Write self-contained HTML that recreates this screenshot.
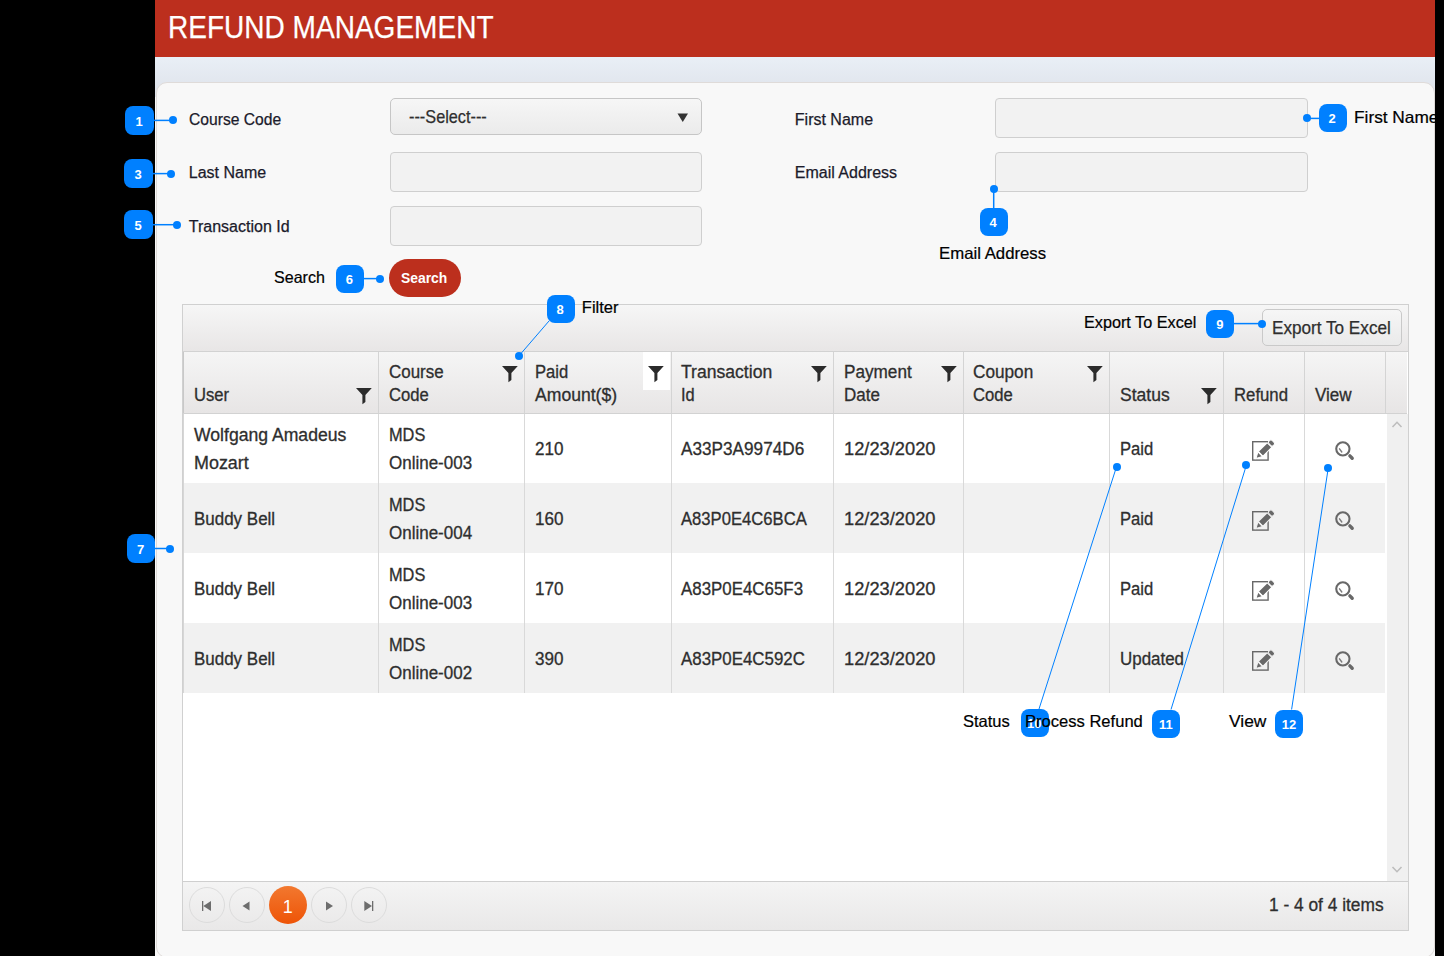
<!DOCTYPE html>
<html><head><meta charset="utf-8"><title>Refund Management</title>
<style>
html,body{margin:0;padding:0;}
body{width:1444px;height:956px;background:#000;position:relative;overflow:hidden;font-family:"Liberation Sans",sans-serif;}
.a{position:absolute;box-sizing:border-box;}
.t{position:absolute;white-space:nowrap;line-height:1;transform-origin:0 0;}
svg{position:absolute;overflow:visible;}
</style></head><body>

<div class="a" style="left:155px;top:0px;width:1280px;height:956px;background:#F8F8F8;"></div>
<div class="a" style="left:155px;top:0px;width:1280px;height:57px;background:#BC2F1E;"></div>
<div class="a" style="left:155px;top:57px;width:1280px;height:40px;background:linear-gradient(#E9EFF6,#DEE2EA);"></div>
<div class="a" style="left:156px;top:82px;width:1279px;height:876px;background:#F8F8F8;border-radius:11px;border:1px solid #DFDBD9;"></div>
<div class="t" style="left:167.90px;top:11.20px;font-size:32px;color:#FFFFFF;transform:scaleX(0.8761);-webkit-text-stroke:0.25px #FFFFFF;">REFUND MANAGEMENT</div>
<div class="t" style="left:188.80px;top:111.50px;font-size:16px;color:#1B1B2B;transform:scaleX(0.9772);-webkit-text-stroke:0.25px #1B1B2B;">Course Code</div>
<div class="t" style="left:188.80px;top:164.50px;font-size:16px;color:#1B1B2B;-webkit-text-stroke:0.25px #1B1B2B;">Last Name</div>
<div class="t" style="left:188.80px;top:218.50px;font-size:16px;color:#1B1B2B;-webkit-text-stroke:0.25px #1B1B2B;">Transaction Id</div>
<div class="t" style="left:794.80px;top:111.50px;font-size:16px;color:#1B1B2B;-webkit-text-stroke:0.25px #1B1B2B;">First Name</div>
<div class="t" style="left:794.80px;top:164.50px;font-size:16px;color:#1B1B2B;-webkit-text-stroke:0.25px #1B1B2B;">Email Address</div>
<div class="a" style="left:390px;top:98px;width:312px;height:37px;background:linear-gradient(#F6F6F6,#EBEBEB);border:1px solid #C6C6C6;border-radius:5px;"></div>
<div class="t" style="left:409.10px;top:107.58px;font-size:18.5px;color:#2E2E2E;transform:scaleX(0.8801);-webkit-text-stroke:0.25px #2E2E2E;">---Select---</div>
<svg style="left:677px;top:113px" width="12" height="10"><path d="M0.5,0.5 H11 L5.75,9 Z" fill="#333"/></svg>
<div class="a" style="left:390px;top:152px;width:312px;height:40px;background:#F2F2F2;border:1px solid #CFCFCF;border-radius:4px;"></div>
<div class="a" style="left:390px;top:206px;width:312px;height:40px;background:#F2F2F2;border:1px solid #CFCFCF;border-radius:4px;"></div>
<div class="a" style="left:995px;top:98px;width:313px;height:40px;background:#F2F2F2;border:1px solid #CFCFCF;border-radius:4px;"></div>
<div class="a" style="left:995px;top:152px;width:313px;height:40px;background:#F2F2F2;border:1px solid #CFCFCF;border-radius:4px;"></div>
<div class="a" style="left:389px;top:259px;width:72px;height:38px;background:#BC2F1D;border-radius:19px;"></div>
<div class="t" style="left:401.00px;top:270.68px;font-size:14.5px;color:#FFFFFF;font-weight:bold;transform:scaleX(0.9576);">Search</div>
<div class="a" style="left:182px;top:304px;width:1227px;height:627px;background:#FFFFFF;border:1px solid #D0D0D0;"></div>
<div class="a" style="left:183px;top:305px;width:1225px;height:46px;background:linear-gradient(#F6F6F6,#E8E6E6);"></div>
<div class="a" style="left:183px;top:351px;width:1225px;height:1px;background:#D2D2D2;"></div>
<div class="a" style="left:1262px;top:309px;width:140px;height:37px;background:linear-gradient(#F6F6F6,#EAEAEA);border:1px solid #C9C9C9;border-radius:5px;"></div>
<div class="t" style="left:1271.70px;top:319.38px;font-size:18.5px;color:#2E2E2E;transform:scaleX(0.9267);-webkit-text-stroke:0.25px #2E2E2E;">Export To Excel</div>
<div class="a" style="left:183px;top:352px;width:1224px;height:61px;background:linear-gradient(#F5F5F5,#E7E5E5);"></div>
<div class="a" style="left:183px;top:413px;width:1224px;height:1px;background:#D2D2D2;"></div>
<div class="a" style="left:183px;top:352px;width:1px;height:61px;background:#C8C8C8;"></div>
<div class="a" style="left:378px;top:352px;width:1px;height:61px;background:#D4D4D4;"></div>
<div class="a" style="left:524px;top:352px;width:1px;height:61px;background:#D4D4D4;"></div>
<div class="a" style="left:671px;top:352px;width:1px;height:61px;background:#D4D4D4;"></div>
<div class="a" style="left:833px;top:352px;width:1px;height:61px;background:#D4D4D4;"></div>
<div class="a" style="left:963px;top:352px;width:1px;height:61px;background:#D4D4D4;"></div>
<div class="a" style="left:1109px;top:352px;width:1px;height:61px;background:#D4D4D4;"></div>
<div class="a" style="left:1223px;top:352px;width:1px;height:61px;background:#D4D4D4;"></div>
<div class="a" style="left:1304px;top:352px;width:1px;height:61px;background:#D4D4D4;"></div>
<div class="a" style="left:1385px;top:352px;width:1px;height:61px;background:#D4D4D4;"></div>
<div class="t" style="left:193.80px;top:386.83px;font-size:17.5px;color:#2E2E2E;transform:scaleX(0.9499);-webkit-text-stroke:0.3px #2E2E2E;">User</div>
<div class="t" style="left:388.90px;top:363.93px;font-size:17.5px;color:#2E2E2E;transform:scaleX(0.9681);-webkit-text-stroke:0.3px #2E2E2E;">Course</div>
<div class="t" style="left:388.90px;top:386.83px;font-size:17.5px;color:#2E2E2E;transform:scaleX(0.9510);-webkit-text-stroke:0.3px #2E2E2E;">Code</div>
<div class="t" style="left:534.80px;top:363.93px;font-size:17.5px;color:#2E2E2E;transform:scaleX(0.9501);-webkit-text-stroke:0.3px #2E2E2E;">Paid</div>
<div class="t" style="left:534.80px;top:386.83px;font-size:17.5px;color:#2E2E2E;transform:scaleX(1.0049);-webkit-text-stroke:0.3px #2E2E2E;">Amount($)</div>
<div class="t" style="left:681.40px;top:363.93px;font-size:17.5px;color:#2E2E2E;transform:scaleX(1.0044);-webkit-text-stroke:0.3px #2E2E2E;">Transaction</div>
<div class="t" style="left:681.40px;top:386.83px;font-size:17.5px;color:#2E2E2E;transform:scaleX(0.9384);-webkit-text-stroke:0.3px #2E2E2E;">Id</div>
<div class="t" style="left:843.90px;top:363.93px;font-size:17.5px;color:#2E2E2E;transform:scaleX(0.9804);-webkit-text-stroke:0.3px #2E2E2E;">Payment</div>
<div class="t" style="left:843.90px;top:386.83px;font-size:17.5px;color:#2E2E2E;transform:scaleX(0.9689);-webkit-text-stroke:0.3px #2E2E2E;">Date</div>
<div class="t" style="left:973.40px;top:363.93px;font-size:17.5px;color:#2E2E2E;transform:scaleX(0.9821);-webkit-text-stroke:0.3px #2E2E2E;">Coupon</div>
<div class="t" style="left:973.40px;top:386.83px;font-size:17.5px;color:#2E2E2E;transform:scaleX(0.9510);-webkit-text-stroke:0.3px #2E2E2E;">Code</div>
<div class="t" style="left:1119.80px;top:386.83px;font-size:17.5px;color:#2E2E2E;transform:scaleX(1.0020);-webkit-text-stroke:0.3px #2E2E2E;">Status</div>
<div class="t" style="left:1234.00px;top:386.83px;font-size:17.5px;color:#2E2E2E;transform:scaleX(0.9566);-webkit-text-stroke:0.3px #2E2E2E;">Refund</div>
<div class="t" style="left:1315.40px;top:386.83px;font-size:17.5px;color:#2E2E2E;transform:scaleX(0.9735);-webkit-text-stroke:0.3px #2E2E2E;">View</div>
<div class="a" style="left:643px;top:352px;width:27px;height:38px;background:#FFFFFF;"></div>
<svg style="left:356px;top:387.8px" width="16" height="16"><path d="M0,0 H15.8 L9.4,7 V14 L6.4,16.2 V7 Z" fill="#2B2B2B"/></svg>
<svg style="left:502.3px;top:366px" width="16" height="16"><path d="M0,0 H15.8 L9.4,7 V14 L6.4,16.2 V7 Z" fill="#2B2B2B"/></svg>
<svg style="left:648.3px;top:365.6px" width="16" height="16"><path d="M0,0 H15.8 L9.4,7 V14 L6.4,16.2 V7 Z" fill="#2B2B2B"/></svg>
<svg style="left:811px;top:365.6px" width="16" height="16"><path d="M0,0 H15.8 L9.4,7 V14 L6.4,16.2 V7 Z" fill="#2B2B2B"/></svg>
<svg style="left:940.6px;top:365.6px" width="16" height="16"><path d="M0,0 H15.8 L9.4,7 V14 L6.4,16.2 V7 Z" fill="#2B2B2B"/></svg>
<svg style="left:1087.2px;top:365.6px" width="16" height="16"><path d="M0,0 H15.8 L9.4,7 V14 L6.4,16.2 V7 Z" fill="#2B2B2B"/></svg>
<svg style="left:1201px;top:387.8px" width="16" height="16"><path d="M0,0 H15.8 L9.4,7 V14 L6.4,16.2 V7 Z" fill="#2B2B2B"/></svg>
<div class="t" style="left:193.80px;top:426.83px;font-size:17.5px;color:#2E2E2E;transform:scaleX(1.0056);-webkit-text-stroke:0.3px #2E2E2E;">Wolfgang Amadeus</div>
<div class="t" style="left:193.80px;top:455.23px;font-size:17.5px;color:#2E2E2E;transform:scaleX(1.0243);-webkit-text-stroke:0.3px #2E2E2E;">Mozart</div>
<div class="t" style="left:388.90px;top:426.83px;font-size:17.5px;color:#2E2E2E;transform:scaleX(0.9332);-webkit-text-stroke:0.3px #2E2E2E;">MDS</div>
<div class="t" style="left:388.90px;top:455.23px;font-size:17.5px;color:#2E2E2E;transform:scaleX(0.9708);-webkit-text-stroke:0.3px #2E2E2E;">Online-003</div>
<div class="t" style="left:534.80px;top:441.23px;font-size:17.5px;color:#2E2E2E;transform:scaleX(0.9760);-webkit-text-stroke:0.3px #2E2E2E;">210</div>
<div class="t" style="left:681.40px;top:441.23px;font-size:17.5px;color:#2E2E2E;transform:scaleX(0.9817);-webkit-text-stroke:0.3px #2E2E2E;">A33P3A9974D6</div>
<div class="t" style="left:844.30px;top:441.23px;font-size:17.5px;color:#2E2E2E;transform:scaleX(1.0445);-webkit-text-stroke:0.3px #2E2E2E;">12/23/2020</div>
<div class="t" style="left:1119.80px;top:441.23px;font-size:17.5px;color:#2E2E2E;transform:scaleX(0.9501);-webkit-text-stroke:0.3px #2E2E2E;">Paid</div>
<svg style="left:1250px;top:438px" width="28" height="26" viewBox="0 0 28 26">
<rect x="2.7" y="3.7" width="15.4" height="18.4" stroke="#686868" stroke-width="1.4" fill="none"/>
<g transform="translate(10.65,15.85) rotate(-45)" fill="#686868" stroke="#FFFFFF" stroke-width="1">
<rect x="0" y="-3.25" width="12.5" height="6.5" rx="0.8"/>
<rect x="13.1" y="-3.1" width="4.5" height="6.2" rx="1.8"/>
<path d="M-0.6,-3.25 L-0.6,3.25 L-6.6,0 Z"/>
</g>
</svg>
<svg style="left:1333px;top:439px" width="24" height="24" viewBox="0 0 24 24">
<circle cx="9.87" cy="9.87" r="6.65" stroke="#686868" stroke-width="2.1" fill="none"/>
<path d="M16.9,16.9 L19.2,19.2" stroke="#686868" stroke-width="3.4" stroke-linecap="round"/>
<path d="M6.5,9.8 L8.8,13" stroke="#7A7A7A" stroke-width="1.4" stroke-linecap="round"/>
</svg>
<div class="a" style="left:183px;top:483px;width:1202px;height:70px;background:#F1F1F1;"></div>
<div class="t" style="left:193.80px;top:511.23px;font-size:17.5px;color:#2E2E2E;transform:scaleX(0.9695);-webkit-text-stroke:0.3px #2E2E2E;">Buddy Bell</div>
<div class="t" style="left:388.90px;top:496.83px;font-size:17.5px;color:#2E2E2E;transform:scaleX(0.9332);-webkit-text-stroke:0.3px #2E2E2E;">MDS</div>
<div class="t" style="left:388.90px;top:525.22px;font-size:17.5px;color:#2E2E2E;transform:scaleX(0.9708);-webkit-text-stroke:0.3px #2E2E2E;">Online-004</div>
<div class="t" style="left:534.80px;top:511.23px;font-size:17.5px;color:#2E2E2E;transform:scaleX(0.9760);-webkit-text-stroke:0.3px #2E2E2E;">160</div>
<div class="t" style="left:681.40px;top:511.23px;font-size:17.5px;color:#2E2E2E;transform:scaleX(0.9509);-webkit-text-stroke:0.3px #2E2E2E;">A83P0E4C6BCA</div>
<div class="t" style="left:844.30px;top:511.23px;font-size:17.5px;color:#2E2E2E;transform:scaleX(1.0445);-webkit-text-stroke:0.3px #2E2E2E;">12/23/2020</div>
<div class="t" style="left:1119.80px;top:511.23px;font-size:17.5px;color:#2E2E2E;transform:scaleX(0.9501);-webkit-text-stroke:0.3px #2E2E2E;">Paid</div>
<svg style="left:1250px;top:508px" width="28" height="26" viewBox="0 0 28 26">
<rect x="2.7" y="3.7" width="15.4" height="18.4" stroke="#686868" stroke-width="1.4" fill="none"/>
<g transform="translate(10.65,15.85) rotate(-45)" fill="#686868" stroke="#F1F1F1" stroke-width="1">
<rect x="0" y="-3.25" width="12.5" height="6.5" rx="0.8"/>
<rect x="13.1" y="-3.1" width="4.5" height="6.2" rx="1.8"/>
<path d="M-0.6,-3.25 L-0.6,3.25 L-6.6,0 Z"/>
</g>
</svg>
<svg style="left:1333px;top:509px" width="24" height="24" viewBox="0 0 24 24">
<circle cx="9.87" cy="9.87" r="6.65" stroke="#686868" stroke-width="2.1" fill="none"/>
<path d="M16.9,16.9 L19.2,19.2" stroke="#686868" stroke-width="3.4" stroke-linecap="round"/>
<path d="M6.5,9.8 L8.8,13" stroke="#7A7A7A" stroke-width="1.4" stroke-linecap="round"/>
</svg>
<div class="t" style="left:193.80px;top:581.22px;font-size:17.5px;color:#2E2E2E;transform:scaleX(0.9695);-webkit-text-stroke:0.3px #2E2E2E;">Buddy Bell</div>
<div class="t" style="left:388.90px;top:566.82px;font-size:17.5px;color:#2E2E2E;transform:scaleX(0.9332);-webkit-text-stroke:0.3px #2E2E2E;">MDS</div>
<div class="t" style="left:388.90px;top:595.22px;font-size:17.5px;color:#2E2E2E;transform:scaleX(0.9708);-webkit-text-stroke:0.3px #2E2E2E;">Online-003</div>
<div class="t" style="left:534.80px;top:581.22px;font-size:17.5px;color:#2E2E2E;transform:scaleX(0.9760);-webkit-text-stroke:0.3px #2E2E2E;">170</div>
<div class="t" style="left:681.40px;top:581.22px;font-size:17.5px;color:#2E2E2E;transform:scaleX(0.9650);-webkit-text-stroke:0.3px #2E2E2E;">A83P0E4C65F3</div>
<div class="t" style="left:844.30px;top:581.22px;font-size:17.5px;color:#2E2E2E;transform:scaleX(1.0445);-webkit-text-stroke:0.3px #2E2E2E;">12/23/2020</div>
<div class="t" style="left:1119.80px;top:581.22px;font-size:17.5px;color:#2E2E2E;transform:scaleX(0.9501);-webkit-text-stroke:0.3px #2E2E2E;">Paid</div>
<svg style="left:1250px;top:578px" width="28" height="26" viewBox="0 0 28 26">
<rect x="2.7" y="3.7" width="15.4" height="18.4" stroke="#686868" stroke-width="1.4" fill="none"/>
<g transform="translate(10.65,15.85) rotate(-45)" fill="#686868" stroke="#FFFFFF" stroke-width="1">
<rect x="0" y="-3.25" width="12.5" height="6.5" rx="0.8"/>
<rect x="13.1" y="-3.1" width="4.5" height="6.2" rx="1.8"/>
<path d="M-0.6,-3.25 L-0.6,3.25 L-6.6,0 Z"/>
</g>
</svg>
<svg style="left:1333px;top:579px" width="24" height="24" viewBox="0 0 24 24">
<circle cx="9.87" cy="9.87" r="6.65" stroke="#686868" stroke-width="2.1" fill="none"/>
<path d="M16.9,16.9 L19.2,19.2" stroke="#686868" stroke-width="3.4" stroke-linecap="round"/>
<path d="M6.5,9.8 L8.8,13" stroke="#7A7A7A" stroke-width="1.4" stroke-linecap="round"/>
</svg>
<div class="a" style="left:183px;top:623px;width:1202px;height:70px;background:#F1F1F1;"></div>
<div class="t" style="left:193.80px;top:651.22px;font-size:17.5px;color:#2E2E2E;transform:scaleX(0.9695);-webkit-text-stroke:0.3px #2E2E2E;">Buddy Bell</div>
<div class="t" style="left:388.90px;top:636.82px;font-size:17.5px;color:#2E2E2E;transform:scaleX(0.9332);-webkit-text-stroke:0.3px #2E2E2E;">MDS</div>
<div class="t" style="left:388.90px;top:665.22px;font-size:17.5px;color:#2E2E2E;transform:scaleX(0.9708);-webkit-text-stroke:0.3px #2E2E2E;">Online-002</div>
<div class="t" style="left:534.80px;top:651.22px;font-size:17.5px;color:#2E2E2E;transform:scaleX(0.9760);-webkit-text-stroke:0.3px #2E2E2E;">390</div>
<div class="t" style="left:681.40px;top:651.22px;font-size:17.5px;color:#2E2E2E;transform:scaleX(0.9650);-webkit-text-stroke:0.3px #2E2E2E;">A83P0E4C592C</div>
<div class="t" style="left:844.30px;top:651.22px;font-size:17.5px;color:#2E2E2E;transform:scaleX(1.0445);-webkit-text-stroke:0.3px #2E2E2E;">12/23/2020</div>
<div class="t" style="left:1119.80px;top:651.22px;font-size:17.5px;color:#2E2E2E;transform:scaleX(0.9675);-webkit-text-stroke:0.3px #2E2E2E;">Updated</div>
<svg style="left:1250px;top:648px" width="28" height="26" viewBox="0 0 28 26">
<rect x="2.7" y="3.7" width="15.4" height="18.4" stroke="#686868" stroke-width="1.4" fill="none"/>
<g transform="translate(10.65,15.85) rotate(-45)" fill="#686868" stroke="#F1F1F1" stroke-width="1">
<rect x="0" y="-3.25" width="12.5" height="6.5" rx="0.8"/>
<rect x="13.1" y="-3.1" width="4.5" height="6.2" rx="1.8"/>
<path d="M-0.6,-3.25 L-0.6,3.25 L-6.6,0 Z"/>
</g>
</svg>
<svg style="left:1333px;top:649px" width="24" height="24" viewBox="0 0 24 24">
<circle cx="9.87" cy="9.87" r="6.65" stroke="#686868" stroke-width="2.1" fill="none"/>
<path d="M16.9,16.9 L19.2,19.2" stroke="#686868" stroke-width="3.4" stroke-linecap="round"/>
<path d="M6.5,9.8 L8.8,13" stroke="#7A7A7A" stroke-width="1.4" stroke-linecap="round"/>
</svg>
<div class="a" style="left:183px;top:414px;width:1px;height:279px;background:#D6D6D6;"></div>
<div class="a" style="left:378px;top:414px;width:1px;height:279px;background:#D9D9D9;"></div>
<div class="a" style="left:524px;top:414px;width:1px;height:279px;background:#D9D9D9;"></div>
<div class="a" style="left:671px;top:414px;width:1px;height:279px;background:#D9D9D9;"></div>
<div class="a" style="left:833px;top:414px;width:1px;height:279px;background:#D9D9D9;"></div>
<div class="a" style="left:963px;top:414px;width:1px;height:279px;background:#D9D9D9;"></div>
<div class="a" style="left:1109px;top:414px;width:1px;height:279px;background:#D9D9D9;"></div>
<div class="a" style="left:1223px;top:414px;width:1px;height:279px;background:#D9D9D9;"></div>
<div class="a" style="left:1304px;top:414px;width:1px;height:279px;background:#D9D9D9;"></div>
<div class="a" style="left:1387px;top:414px;width:21px;height:467px;background:#F0F0F0;"></div>
<svg style="left:1391px;top:419px" width="12" height="10"><path d="M1.5,8 L6,3.3 L10.5,8" stroke="#BDBDBD" stroke-width="1.6" fill="none"/></svg>
<svg style="left:1391px;top:865px" width="12" height="10"><path d="M1.5,2 L6,6.7 L10.5,2" stroke="#BDBDBD" stroke-width="1.6" fill="none"/></svg>
<div class="a" style="left:183px;top:881px;width:1225px;height:1px;background:#CFCFCF;"></div>
<div class="a" style="left:183px;top:882px;width:1225px;height:48px;background:linear-gradient(#F4F4F4,#E9E8E8);"></div>
<div class="a" style="left:189px;top:887px;width:36px;height:36px;border-radius:50%;border:1px solid #DCDCDC;"></div>
<div class="a" style="left:229px;top:887px;width:36px;height:36px;border-radius:50%;border:1px solid #DCDCDC;"></div>
<div class="a" style="left:311px;top:887px;width:36px;height:36px;border-radius:50%;border:1px solid #DCDCDC;"></div>
<div class="a" style="left:351px;top:887px;width:36px;height:36px;border-radius:50%;border:1px solid #DCDCDC;"></div>
<div class="a" style="left:269px;top:886px;width:38px;height:38px;border-radius:50%;background:linear-gradient(#F2782F,#EE5407);"></div>
<div class="t" style="left:282.80px;top:898.00px;font-size:18px;color:#FFFFFF;">1</div>
<svg style="left:201px;top:900px" width="12" height="12"><rect x="1" y="1" width="1.3" height="10" fill="#6D6D6D"/><path d="M2.3,6 L10,1 V11 Z" fill="#6D6D6D"/></svg>
<svg style="left:241px;top:900px" width="12" height="12"><path d="M1.5,6 L8.5,1.5 V10.5 Z" fill="#6D6D6D"/></svg>
<svg style="left:323.5px;top:900px" width="12" height="12"><path d="M9,6 L2,1.5 V10.5 Z" fill="#6D6D6D"/></svg>
<svg style="left:362.5px;top:900px" width="12" height="12"><rect x="9" y="1" width="1.3" height="10" fill="#6D6D6D"/><path d="M9,6 L1.3,1 V11 Z" fill="#6D6D6D"/></svg>
<div class="t" style="left:1269.10px;top:896.82px;font-size:17.5px;color:#2E2E2E;transform:scaleX(0.9901);-webkit-text-stroke:0.3px #2E2E2E;">1 - 4 of 4 items</div>
<svg style="left:0;top:0" width="1444" height="956"><line x1="154" y1="120.4" x2="173.3" y2="120.4" stroke="#0080FF" stroke-width="1.5"/></svg>
<div class="a" style="left:125px;top:106px;width:29px;height:29px;background:#0080FF;border-radius:8px;"></div>
<div class="t" style="left:135.38px;top:114.65px;font-size:13px;color:#FFFFFF;font-weight:bold;-webkit-text-stroke:0.01px #fff;">1</div>
<div class="a" style="left:169.3px;top:116.4px;width:8px;height:8px;background:#0080FF;border-radius:50%;"></div>
<svg style="left:0;top:0" width="1444" height="956"><line x1="153" y1="173.6" x2="170.6" y2="173.6" stroke="#0080FF" stroke-width="1.5"/></svg>
<div class="a" style="left:124px;top:159px;width:29px;height:29px;background:#0080FF;border-radius:8px;"></div>
<div class="t" style="left:134.38px;top:167.65px;font-size:13px;color:#FFFFFF;font-weight:bold;-webkit-text-stroke:0.01px #fff;">3</div>
<div class="a" style="left:166.6px;top:169.6px;width:8px;height:8px;background:#0080FF;border-radius:50%;"></div>
<svg style="left:0;top:0" width="1444" height="956"><line x1="153" y1="224.7" x2="177.4" y2="224.7" stroke="#0080FF" stroke-width="1.5"/></svg>
<div class="a" style="left:124px;top:210px;width:29px;height:29px;background:#0080FF;border-radius:8px;"></div>
<div class="t" style="left:134.38px;top:218.65px;font-size:13px;color:#FFFFFF;font-weight:bold;-webkit-text-stroke:0.01px #fff;">5</div>
<div class="a" style="left:173.4px;top:220.7px;width:8px;height:8px;background:#0080FF;border-radius:50%;"></div>
<svg style="left:0;top:0" width="1444" height="956"><line x1="155" y1="548.5" x2="169.6" y2="548.5" stroke="#0080FF" stroke-width="1.5"/></svg>
<div class="a" style="left:127px;top:534px;width:28px;height:29px;background:#0080FF;border-radius:8px;"></div>
<div class="t" style="left:136.88px;top:542.65px;font-size:13px;color:#FFFFFF;font-weight:bold;-webkit-text-stroke:0.01px #fff;">7</div>
<div class="a" style="left:165.6px;top:544.5px;width:8px;height:8px;background:#0080FF;border-radius:50%;"></div>
<svg style="left:0;top:0" width="1444" height="956"><line x1="1307.3" y1="118.4" x2="1319" y2="118.4" stroke="#0080FF" stroke-width="1.5"/></svg>
<div class="a" style="left:1318.6px;top:104.2px;width:28px;height:28px;background:#0080FF;border-radius:8px;"></div>
<div class="t" style="left:1328.47px;top:112.35px;font-size:13px;color:#FFFFFF;font-weight:bold;-webkit-text-stroke:0.01px #fff;">2</div>
<div class="a" style="left:1303.3px;top:114.4px;width:8px;height:8px;background:#0080FF;border-radius:50%;"></div>
<div class="t" style="left:1353.70px;top:109.27px;font-size:16.5px;color:#000000;transform:scaleX(1.0465);-webkit-text-stroke:0.2px #000;">First Name</div>
<svg style="left:0;top:0" width="1444" height="956"><line x1="993.7" y1="188.5" x2="993.7" y2="209" stroke="#0080FF" stroke-width="1.5"/></svg>
<div class="a" style="left:979.6px;top:208.2px;width:28px;height:28px;background:#0080FF;border-radius:8px;"></div>
<div class="t" style="left:989.48px;top:216.35px;font-size:13px;color:#FFFFFF;font-weight:bold;-webkit-text-stroke:0.01px #fff;">4</div>
<div class="a" style="left:989.7px;top:184.5px;width:8px;height:8px;background:#0080FF;border-radius:50%;"></div>
<div class="t" style="left:938.70px;top:245.17px;font-size:16.5px;color:#000000;transform:scaleX(1.0156);-webkit-text-stroke:0.2px #000;">Email Address</div>
<svg style="left:0;top:0" width="1444" height="956"><line x1="363" y1="278.6" x2="379.6" y2="278.6" stroke="#0080FF" stroke-width="1.5"/></svg>
<div class="a" style="left:335.8px;top:264.5px;width:28px;height:28px;background:#0080FF;border-radius:8px;"></div>
<div class="t" style="left:345.68px;top:272.65px;font-size:13px;color:#FFFFFF;font-weight:bold;-webkit-text-stroke:0.01px #fff;">6</div>
<div class="a" style="left:375.6px;top:274.6px;width:8px;height:8px;background:#0080FF;border-radius:50%;"></div>
<div class="t" style="left:273.80px;top:269.48px;font-size:16.5px;color:#000000;transform:scaleX(0.9732);-webkit-text-stroke:0.2px #000;">Search</div>
<svg style="left:0;top:0" width="1444" height="956"><line x1="549" y1="321" x2="518.7" y2="356.2" stroke="#0080FF" stroke-width="1"/></svg>
<div class="a" style="left:546.5px;top:294.8px;width:28px;height:28px;background:#0080FF;border-radius:8px;"></div>
<div class="t" style="left:556.38px;top:302.95px;font-size:13px;color:#FFFFFF;font-weight:bold;-webkit-text-stroke:0.01px #fff;">8</div>
<div class="a" style="left:514.7px;top:352.2px;width:8px;height:8px;background:#0080FF;border-radius:50%;"></div>
<div class="t" style="left:581.80px;top:299.38px;font-size:16.5px;color:#000000;-webkit-text-stroke:0.2px #000;">Filter</div>
<svg style="left:0;top:0" width="1444" height="956"><line x1="1234" y1="323.6" x2="1261.7" y2="323.6" stroke="#0080FF" stroke-width="1.5"/></svg>
<div class="a" style="left:1206.4px;top:309.5px;width:28px;height:28px;background:#0080FF;border-radius:8px;"></div>
<div class="t" style="left:1216.28px;top:317.65px;font-size:13px;color:#FFFFFF;font-weight:bold;-webkit-text-stroke:0.01px #fff;">9</div>
<div class="a" style="left:1257.7px;top:319.6px;width:8px;height:8px;background:#0080FF;border-radius:50%;"></div>
<div class="t" style="left:1084.30px;top:313.88px;font-size:16.5px;color:#000000;transform:scaleX(0.9829);-webkit-text-stroke:0.2px #000;">Export To Excel</div>
<svg style="left:0;top:0" width="1444" height="956"><line x1="1116.6" y1="466.5" x2="1039" y2="709" stroke="#0080FF" stroke-width="1"/></svg>
<svg style="left:0;top:0" width="1444" height="956"><line x1="1246.3" y1="465.4" x2="1171" y2="709.5" stroke="#0080FF" stroke-width="1"/></svg>
<svg style="left:0;top:0" width="1444" height="956"><line x1="1328.3" y1="467.6" x2="1291.6" y2="709.5" stroke="#0080FF" stroke-width="1"/></svg>
<div class="a" style="left:1112.6px;top:462.5px;width:8px;height:8px;background:#0080FF;border-radius:50%;"></div>
<div class="a" style="left:1242.3px;top:461.4px;width:8px;height:8px;background:#0080FF;border-radius:50%;"></div>
<div class="a" style="left:1324.3px;top:463.6px;width:8px;height:8px;background:#0080FF;border-radius:50%;"></div>
<div class="a" style="left:1020.8px;top:708.7px;width:28px;height:28px;background:#0080FF;border-radius:8px;"></div>
<div class="t" style="left:1027.08px;top:716.85px;font-size:13px;color:#FFFFFF;font-weight:bold;-webkit-text-stroke:0.01px #fff;">10</div>
<div class="t" style="left:963.00px;top:713.48px;font-size:16.5px;color:#000000;-webkit-text-stroke:0.2px #000;">Status</div>
<div class="a" style="left:1152.4px;top:709.5px;width:28px;height:28px;background:#0080FF;border-radius:8px;"></div>
<div class="t" style="left:1159.03px;top:717.65px;font-size:13px;color:#FFFFFF;font-weight:bold;-webkit-text-stroke:0.01px #fff;">11</div>
<div class="a" style="left:1275.4px;top:709.5px;width:28px;height:28px;background:#0080FF;border-radius:8px;"></div>
<div class="t" style="left:1281.68px;top:717.65px;font-size:13px;color:#FFFFFF;font-weight:bold;-webkit-text-stroke:0.01px #fff;">12</div>
<div class="t" style="left:1024.70px;top:713.48px;font-size:16.5px;color:#000000;transform:scaleX(1.0034);-webkit-text-stroke:0.2px #000;">Process Refund</div>
<div class="t" style="left:1228.60px;top:713.48px;font-size:16.5px;color:#000000;transform:scaleX(1.0549);-webkit-text-stroke:0.2px #000;">View</div>
<div class="a" style="left:1435px;top:0px;width:9px;height:956px;background:#000;"></div>
</body></html>
